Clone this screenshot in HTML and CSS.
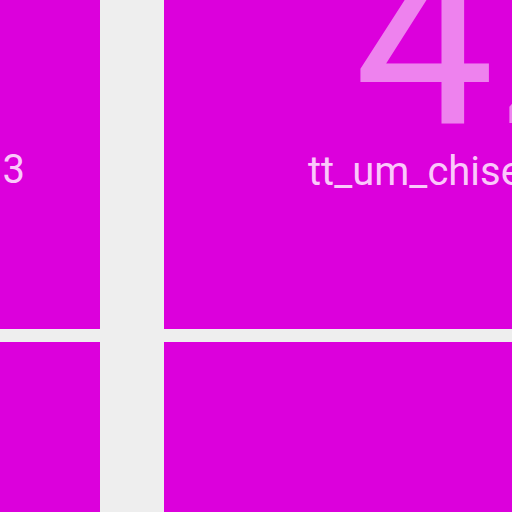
FILE: index.html
```html
<!DOCTYPE html>
<html>
<head>
<meta charset="utf-8">
<link rel="stylesheet" href="styles.css">
</head>
<body>
<div class="grid">
  <div class="tile tile-a">
    <div class="name name-a">3</div>
  </div>
  <div class="tile tile-b">
    <div class="num">42</div>
    <div class="name name-b">tt_um_chisel</div>
  </div>
  <div class="tile"></div>
  <div class="tile"></div>
</div>
</body>
</html>
```
FILE: styles.css
```css
html, body {
  margin: 0;
  padding: 0;
  width: 512px;
  height: 512px;
  overflow: hidden;
  background: #eeeeee;
  font-family: Roboto, "Liberation Sans", sans-serif;
}
.grid {
  display: grid;
  grid-template-columns: 100px 348px;
  grid-template-rows: 329px 170px;
  column-gap: 64px;
  row-gap: 13px;
}
.tile {
  background: #dc00dc;
  overflow: hidden;
  white-space: nowrap;
}
.num {
  font-size: 250px;
  line-height: 200px;
  height: 200px;
  margin-top: -62px;
  padding-left: 190px;
  color: #ee82ee;
}
.name {
  font-size: 40px;
  line-height: 44px;
  color: #fbc8fb;
}
.name-a {
  padding-top: 148px;
  padding-left: 2.5px;
}
.name-b {
  margin-top: 12px;
  padding-left: 144px;
}
```
